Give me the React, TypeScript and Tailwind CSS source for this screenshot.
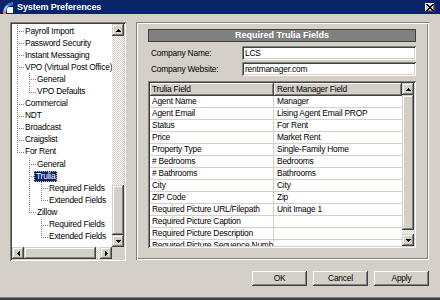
import React from "react";

const sunken =
  "shadow-[inset_1px_1px_#808080,inset_-1px_-1px_#ffffff,inset_2px_2px_#404040,inset_-2px_-2px_#d4d0c8]";
const raised =
  "shadow-[inset_-1px_-1px_#404040,inset_1px_1px_#d4d0c8,inset_-2px_-2px_#808080,inset_2px_2px_#ffffff]";
const raisedBtn =
  "shadow-[inset_-1px_-1px_#404040,inset_1px_1px_#ffffff,inset_-2px_-2px_#808080]";
const etched =
  "shadow-[inset_1px_1px_#808080,inset_-1px_-1px_#ffffff,inset_2px_2px_#ffffff,inset_-2px_-2px_#808080]";
const checker =
  "bg-[repeating-conic-gradient(#ffffff_0_25%,#d4d0c8_0_50%)] bg-[length:2px_2px]";

const arrows: Record<string, string> = {
  up: "M2 0h1v1H2z M1 1h3v1H1z M0 2h5v1H0z",
  down: "M0 0h5v1H0z M1 1h3v1H1z M2 2h1v1H2z",
  left: "M2 0h1v5H2z M1 1h1v3H1z M0 2h1v1H0z",
  right: "M0 0h1v5H0z M1 1h1v3H1z M2 2h1v1H2z",
};

function Arrow({ d }: { d: string }) {
  const v = d === "up" || d === "down";
  return (
    <svg
      width={v ? 5 : 3}
      height={v ? 3 : 5}
      viewBox={v ? "0 0 5 3" : "0 0 3 5"}
      shapeRendering="crispEdges"
    >
      <path d={arrows[d]} fill="#000" />
    </svg>
  );
}

function SBtn({ d }: { d: string }) {
  return (
    <div
      className={`w-[12px] h-[12px] shrink-0 bg-[#d4d0c8] ${raised} flex items-center justify-center`}
    >
      <Arrow d={d} />
    </div>
  );
}

function Guide({ t }: { t: string }) {
  const st = { stroke: "#808080", strokeWidth: 1, strokeDasharray: "1 1" };
  return (
    <svg width="12" height="12" className="shrink-0" shapeRendering="crispEdges">
      {(t === "|" || t === "T") && <line x1="5.5" y1="0" x2="5.5" y2="12" {...st} />}
      {t === "L" && <line x1="5.5" y1="0" x2="5.5" y2="7" {...st} />}
      {(t === "T" || t === "L") && <line x1="7" y1="6.5" x2="12" y2="6.5" {...st} />}
    </svg>
  );
}

const treeRows: { label: string; cells: string; sel?: boolean }[] = [
  { label: "Payroll Import", cells: "T" },
  { label: "Password Security", cells: "T" },
  { label: "Instant Messaging", cells: "T" },
  { label: "VPO (Virtual Post Office)", cells: "T" },
  { label: "General", cells: "|T" },
  { label: "VPO Defaults", cells: "|L" },
  { label: "Commercial", cells: "T" },
  { label: "NDT", cells: "T" },
  { label: "Broadcast", cells: "T" },
  { label: "Craigslist", cells: "T" },
  { label: "For Rent", cells: "L" },
  { label: "General", cells: " T" },
  { label: "Trulia", cells: " T", sel: true },
  { label: "Required Fields", cells: " |T" },
  { label: "Extended Fields", cells: " |L" },
  { label: "Zillow", cells: " L" },
  { label: "Required Fields", cells: "  T" },
  { label: "Extended Fields", cells: "  L" },
];

const tableRows: [string, string][] = [
  ["Agent Name", "Manager"],
  ["Agent Email", "Lising Agent Email PROP"],
  ["Status", "For Rent"],
  ["Price", "Market Rent"],
  ["Property Type", "Single-Family Home"],
  ["# Bedrooms", "Bedrooms"],
  ["# Bathrooms", "Bathrooms"],
  ["City", "City"],
  ["ZIP Code", "Zip"],
  ["Required Picture URL/Filepath", "Unit Image 1"],
  ["Required Picture Caption", ""],
  ["Required Picture Description", ""],
  ["Required Picture Sequence Number", ""],
];

function Logo() {
  return (
    <svg width="12" height="13" viewBox="0 0 12 13">
      <rect x="5" y="6" width="6" height="6" fill="#ffffff" />
      <path d="M1 12 C1.5 6 5 2 11 1 L11 4 C7 4.5 4.5 7.5 4 12 Z" fill="#3a78d8" />
      <path d="M1 12 C1.5 8 3 5.5 5 4 L6 5.5 C4.5 7 3.8 9 3.6 12 Z" fill="#9cc4f4" />
      <rect x="1" y="10" width="3" height="3" fill="#f08020" />
    </svg>
  );
}

function CloseX() {
  return (
    <svg width="8" height="7" viewBox="0 0 8 7" shapeRendering="crispEdges">
      <path
        d="M0 0h2v1H0z M1 1h2v1H1z M2 2h4v1H2z M3 3h2v1H3z M2 4h4v1H2z M1 5h2v1H1z M0 6h2v1H0z M6 0h2v1H6z M5 1h2v1H5z M5 5h2v1H5z M6 6h2v1H6z"
        fill="#000"
      />
    </svg>
  );
}

export default function App() {
  return (
    <div
      className={`w-[440px] h-[300px] bg-[#d4d0c8] flex flex-col overflow-hidden font-['Liberation_Sans',sans-serif] text-[8.4px] tracking-[-0.2px] text-black shadow-[inset_0_-2px_#404040,inset_0_-3px_#808080]`}
    >
      {/* Title bar */}
      <div className="h-[14px] shrink-0 bg-[#0a246a] flex items-center">
        <div className="ml-[2px] w-[12px] h-[13px] flex items-center">
          <Logo />
        </div>
        <span className="ml-[3px] font-bold text-[9px] tracking-[-0.1px] leading-[14px] text-white">
          System Preferences
        </span>
        <div
          className={`ml-auto mr-[5px] w-[10px] h-[9px] bg-[#d4d0c8] ${raisedBtn} flex items-center justify-center`}
        >
          <CloseX />
        </div>
      </div>

      {/* Main area */}
      <div className="flex items-start pl-[10px] pt-[8px] shrink-0">
        {/* Tree */}
        <div className={`w-[116px] h-[239px] shrink-0 bg-white p-[2px] ${sunken} flex flex-col`}>
          <div className="flex h-[223px]">
            <div className="w-[100px] overflow-hidden pt-[1px]">
              {treeRows.map((r, i) => (
                <div key={i} className="flex h-[12.1px] items-center whitespace-nowrap">
                  {r.cells.split("").map((c, j) => (
                    <Guide key={j} t={c} />
                  ))}
                  <span
                    className={
                      r.sel
                        ? "ml-[-2px] px-[2px] leading-[11px] bg-[#0a246a] text-white outline outline-1 outline-dotted outline-[#c8c078] -outline-offset-1"
                        : "ml-[-1px] px-[2px] leading-[11px]"
                    }
                  >
                    {r.label}
                  </span>
                </div>
              ))}
            </div>
            <div className="w-[12px] flex flex-col">
              <SBtn d="up" />
              <div className={`flex-1 ${checker}`} />
              <div className={`h-[50px] shrink-0 bg-[#d4d0c8] ${raised}`} />
              <SBtn d="down" />
            </div>
          </div>
          <div className="flex h-[12px]">
            <SBtn d="left" />
            <div className={`w-[72px] shrink-0 bg-[#d4d0c8] ${raised}`} />
            <div className={`flex-1 ${checker}`} />
            <SBtn d="right" />
            <div className="w-[12px] shrink-0 bg-[#d4d0c8]" />
          </div>
        </div>

        {/* Group */}
        <div className={`ml-[10px] w-[293px] h-[238px] ${etched} pt-[7px] pl-[12px] flex flex-col`}>
          <div className="w-[268px] h-[13px] bg-[#808080] border border-[#404040] flex items-center justify-center font-bold text-[9px] tracking-[0px] text-white">
            Required Trulia Fields
          </div>
          <div className="mt-[4px] flex items-center h-[14px]">
            <span className="w-[94px] pl-[3px]">Company Name:</span>
            <div className={`w-[174px] h-[14px] bg-white ${sunken} pl-[3px] flex items-center`}>
              LCS
            </div>
          </div>
          <div className="mt-[2px] flex items-center h-[14px]">
            <span className="w-[94px] pl-[3px]">Company Website:</span>
            <div className={`w-[174px] h-[14px] bg-white ${sunken} pl-[3px] flex items-center`}>
              rentmanager.com
            </div>
          </div>

          {/* Table */}
          <div className={`mt-[5px] w-[268px] h-[167px] bg-white p-[2px] ${sunken} flex`}>
            <div className="w-[252px] flex flex-col overflow-hidden">
              <div className="flex h-[13px] shrink-0">
                <div className={`w-[124px] bg-[#d4d0c8] ${raisedBtn} pl-[2px] flex items-center`}>
                  Trulia Field
                </div>
                <div className={`w-[128px] bg-[#d4d0c8] ${raisedBtn} pl-[3px] flex items-center`}>
                  Rent Manager Field
                </div>
              </div>
              {tableRows.map(([a, b], i) => (
                <div key={i} className="flex h-[12px] shrink-0 border-b border-[#d4d0c8]">
                  <div className="w-[124px] border-r border-[#d4d0c8] pl-[2px] leading-[11px] whitespace-nowrap overflow-hidden">
                    {a}
                  </div>
                  <div className="w-[128px] pl-[3px] leading-[11px] whitespace-nowrap overflow-hidden">
                    {b}
                  </div>
                </div>
              ))}
            </div>
            <div className="w-[12px] flex flex-col">
              <SBtn d="up" />
              <div className={`h-[135px] shrink-0 bg-[#d4d0c8] ${raised}`} />
              <div className={`flex-1 ${checker}`} />
              <SBtn d="down" />
            </div>
          </div>
        </div>
      </div>

      {/* Buttons */}
      <div className="mt-[10px] flex justify-end gap-[6px] pr-[11px]">
        {["OK", "Cancel", "Apply"].map((t) => (
          <div
            key={t}
            className={`w-[55px] h-[15px] bg-[#d4d0c8] ${raisedBtn} flex items-center justify-center`}
          >
            {t}
          </div>
        ))}
      </div>
    </div>
  );
}
